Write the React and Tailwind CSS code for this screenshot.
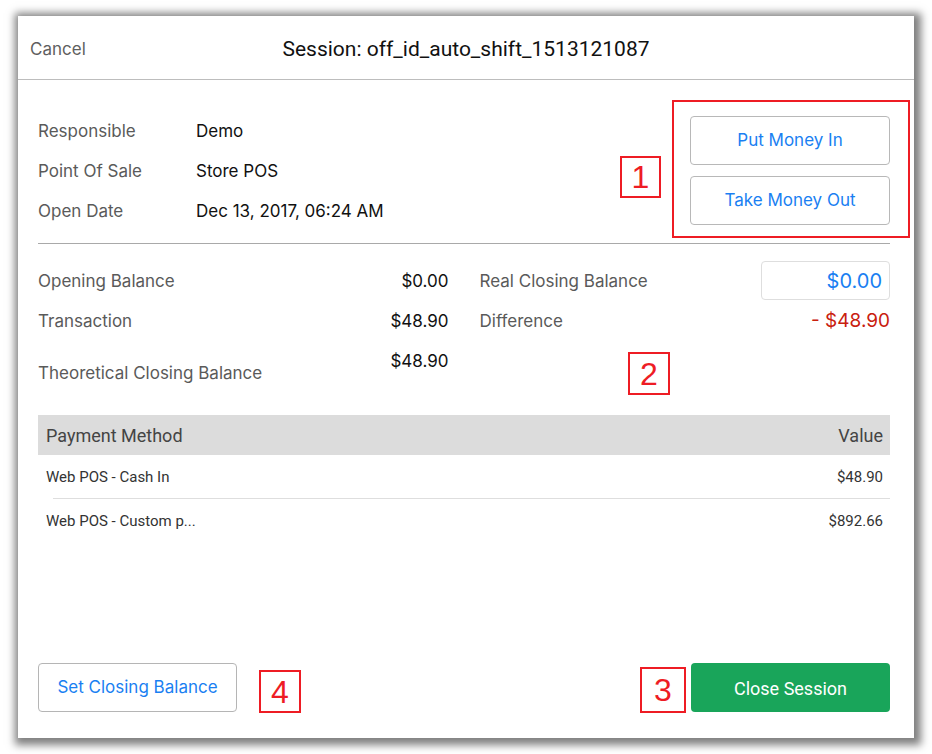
import React from 'react';

const sf = { fontFamily: 'Inter, "Liberation Sans", sans-serif' };
const rb = { fontFamily: 'Roboto, "Liberation Sans", sans-serif' };

const Mark = ({ className, n }) => (
  <div
    className={`absolute flex items-center justify-center border-2 border-[#ee1c24] text-[32px] leading-none text-[#ee1c24] ${className}`}
    style={{ fontFamily: '"Liberation Sans", Arial, sans-serif' }}
  >
    {n}
  </div>
);

const InfoRow = ({ label, value }) => (
  <div className="flex h-10 items-center">
    <span className="w-[158px] text-[#5a5a5a]">{label}</span>
    <span className="text-[#111]">{value}</span>
  </div>
);

const rows = [
  { name: 'Web POS - Cash In', value: '$48.90' },
  { name: 'Web POS - Custom p...', value: '$892.66' },
];

export default function App() {
  return (
    <div className="h-[754px] w-[932px] bg-white pl-[18px] pt-4" style={sf}>
      <div className="relative flex h-[722px] w-[896px] flex-col bg-white text-[17px] shadow-[2px_2px_8px_5px_rgba(0,0,0,0.5)]">
        <div className="relative flex h-16 shrink-0 items-center justify-center border-b border-[#bdbdbd] pt-1">
          <span className="absolute left-3 text-[#5f5f5f]">Cancel</span>
          <span className="text-[21px] text-[#111]" style={rb}>Session: off_id_auto_shift_1513121087</span>
        </div>

        <div className="flex flex-1 flex-col pl-5 pr-6">
          <div className="flex h-[164px] justify-between border-b border-[#a9a9a9] pt-[32px]">
            <div>
              <InfoRow label="Responsible" value="Demo" />
              <InfoRow label="Point Of Sale" value="Store POS" />
              <InfoRow label="Open Date" value="Dec 13, 2017, 06:24 AM" />
            </div>
            <div className="mt-1 flex w-[200px] flex-col gap-[11px]">
              <button className="h-[49px] rounded border border-[#b8b8b8] pt-px text-[#1a7ff2]">Put Money In</button>
              <button className="h-[49px] rounded border border-[#b8b8b8] pt-px text-[#1a7ff2]">Take Money Out</button>
            </div>
          </div>

          <div className="grid grid-cols-2 gap-x-[31px] pt-[17px]">
            <div className="pt-px">
              <div className="flex h-10 items-center justify-between">
                <span className="text-[#5a5a5a]">Opening Balance</span>
                <span className="text-[#111]">$0.00</span>
              </div>
              <div className="flex h-10 items-center justify-between">
                <span className="text-[#5a5a5a]">Transaction</span>
                <span className="text-[#111]">$48.90</span>
              </div>
              <div className="flex h-[49px] items-start justify-between">
                <span className="mt-[19px] text-[#5a5a5a]">Theoretical Closing Balance</span>
                <span className="mt-[7px] text-[#111]">$48.90</span>
              </div>
            </div>
            <div>
              <div className="flex h-10 items-start justify-between">
                <span className="mt-2 text-[#5a5a5a]">Real Closing Balance</span>
                <div className="flex h-[39px] w-[129px] items-center justify-end rounded border border-[#dedede] pr-[7px] text-[20px] text-[#1a7ff2]">
                  $0.00
                </div>
              </div>
              <div className="flex h-10 items-center justify-between pt-px">
                <span className="text-[#5a5a5a]">Difference</span>
                <span className="text-[19px] text-[#c9200e]">- $48.90</span>
              </div>
            </div>
          </div>

          <div className="mt-6" style={rb}>
            <div className="flex h-10 items-center justify-between bg-[#dcdcdc] pl-2 pr-[7px] pt-px text-[18px] text-[#444]">
              <span>Payment Method</span>
              <span>Value</span>
            </div>
            {rows.map((r, i) => (
              <div key={r.name} className={`ml-[15px] flex h-11 items-center justify-between pr-[7px] pt-px text-[15px] text-[#333] ${i === 0 ? 'border-b border-[#dedede]' : ''}`}>
                <span className="-ml-[7px]">{r.name}</span>
                <span>{r.value}</span>
              </div>
            ))}
          </div>

          <div className="mt-auto flex justify-between pb-[26px]">
            <button className="h-[49px] w-[199px] rounded border border-[#b5b5b5] pt-px text-[#1a7ff2]">Set Closing Balance</button>
            <button className="h-[49px] w-[199px] rounded bg-[#19a55a] pt-px text-[18px] text-white" style={rb}>Close Session</button>
          </div>
        </div>

        <div className="absolute left-[654px] top-[84px] h-[138px] w-[238px] border-2 border-[#ee1c24]" />
        <Mark n="1" className="left-[602px] top-[140px] h-[42px] w-[41px]" />
        <Mark n="2" className="left-[610px] top-[336px] h-[43px] w-[42px]" />
        <Mark n="3" className="left-[622px] top-[651px] h-[46px] w-[46px]" />
        <Mark n="4" className="left-[241px] top-[654px] h-[43px] w-[42px]" />
      </div>
    </div>
  );
}
